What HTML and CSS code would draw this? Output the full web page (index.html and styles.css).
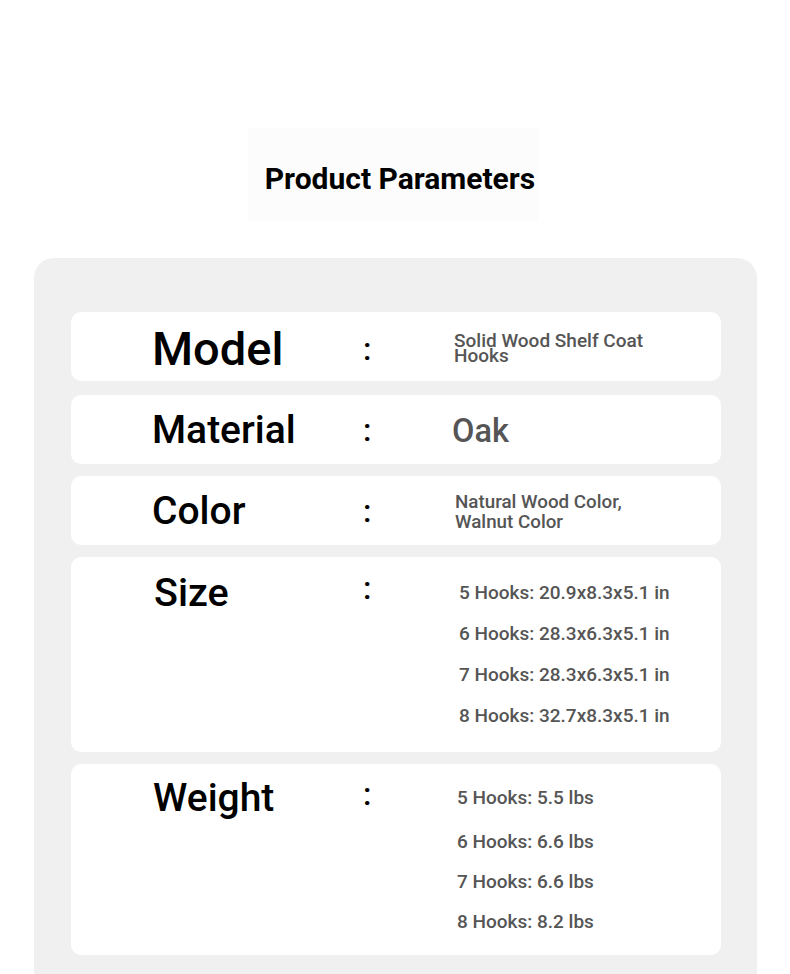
FILE: index.html
```html
<!DOCTYPE html>
<html lang="en">
<head>
<meta charset="utf-8">
<title>Product Parameters</title>
<link rel="stylesheet" href="styles.css">
</head>
<body>
<div class="page">
  <header class="title-box">
    <h1 class="title">Product Parameters</h1>
  </header>
  <section class="panel">
    <div class="card card-model">
      <div class="label label-model">Model</div>
      <div class="colon">:</div>
      <div class="value value-model">Solid Wood Shelf Coat<br>Hooks</div>
    </div>
    <div class="card card-material">
      <div class="label">Material</div>
      <div class="colon">:</div>
      <div class="value value-oak">Oak</div>
    </div>
    <div class="card card-color">
      <div class="label label-color">Color</div>
      <div class="colon">:</div>
      <div class="value value-color">Natural Wood Color,<br>Walnut Color</div>
    </div>
    <div class="card card-size">
      <div class="label label-size">Size</div>
      <div class="colon">:</div>
      <ul class="value list list-size">
        <li>5 Hooks: 20.9x8.3x5.1 in</li>
        <li>6 Hooks: 28.3x6.3x5.1 in</li>
        <li>7 Hooks: 28.3x6.3x5.1 in</li>
        <li>8 Hooks: 32.7x8.3x5.1 in</li>
      </ul>
    </div>
    <div class="card card-weight">
      <div class="label label-weight">Weight</div>
      <div class="colon">:</div>
      <ul class="value list list-weight">
        <li>5 Hooks: 5.5 lbs</li>
        <li>6 Hooks: 6.6 lbs</li>
        <li>7 Hooks: 6.6 lbs</li>
        <li>8 Hooks: 8.2 lbs</li>
      </ul>
    </div>
  </section>
</div>
</body>
</html>
```

FILE: styles.css
```css
* { box-sizing: border-box; }

body {
  margin: 0;
  background: #ffffff;
  font-family: Roboto, "Liberation Sans", Arial, sans-serif;
  color: #000;
}

.page {
  padding-top: 128px;
}

.title-box {
  width: 290px;
  height: 94px;
  margin: 0 0 36px 248px;
  padding: 6px 0 0 14px;
  background: #fcfcfc;
}

.title {
  margin: 0;
  font-size: 30px;
  font-weight: 700;
  line-height: 89px;
  text-align: center;
  color: #000;
  white-space: nowrap;
}

.panel {
  margin: 0 33px 0 34px;
  background: #f0f0f0;
  border-radius: 20px 20px 0 0;
  padding: 54px 36px 40px 37px;
  display: flex;
  flex-direction: column;
  gap: 12px;
}

.card {
  background: #ffffff;
  border-radius: 10px;
  display: grid;
  grid-template-columns: 210px 90px 1fr;
  align-items: center;
  padding-left: 81px;
  min-height: 69px;
}

.card-model {
  padding-top: 5px;
  margin-bottom: 2px;
}

.card-material,
.card-color {
  padding-top: 2px;
}

.label {
  font-size: 39px;
  font-weight: 500;
  line-height: 1.2;
  color: #000;
  white-space: nowrap;
}

.label-model { font-size: 47px; }
.label-color { font-size: 39px; }
.label-size { font-size: 39.5px; padding-left: 2px; }
.label-weight { font-size: 39px; padding-left: 1px; }

.colon {
  font-size: 32px;
  font-weight: 500;
  line-height: 1.2;
  padding-left: 1px;
}

.value {
  color: #555555;
  font-size: 19px;
  font-weight: 500;
  padding-left: 3px;
}

.value-model {
  line-height: 15px;
  padding-left: 2px;
  margin-top: -2px;
}

.value-oak {
  font-size: 32.5px;
  line-height: 1.2;
  padding-left: 0;
  margin-top: 2px;
}

.value-color {
  font-size: 18.8px;
  line-height: 20px;
  padding-left: 3px;
}

.list {
  list-style: none;
  margin: 0;
  padding: 0 0 0 7px;
}

.card-size,
.card-weight {
  align-items: start;
}

.card-size {
  padding-top: 12px;
  padding-bottom: 16px;
}

.list-size {
  margin-top: 3px;
}

.list-size li {
  line-height: 41px;
}

.card-weight {
  padding-top: 11px;
  padding-bottom: 13px;
}

.list-weight {
  margin-top: 3px;
  padding-left: 5px;
}

.list-weight li {
  line-height: 40px;
}

.list-weight li:first-child {
  margin-bottom: 4px;
}
```
